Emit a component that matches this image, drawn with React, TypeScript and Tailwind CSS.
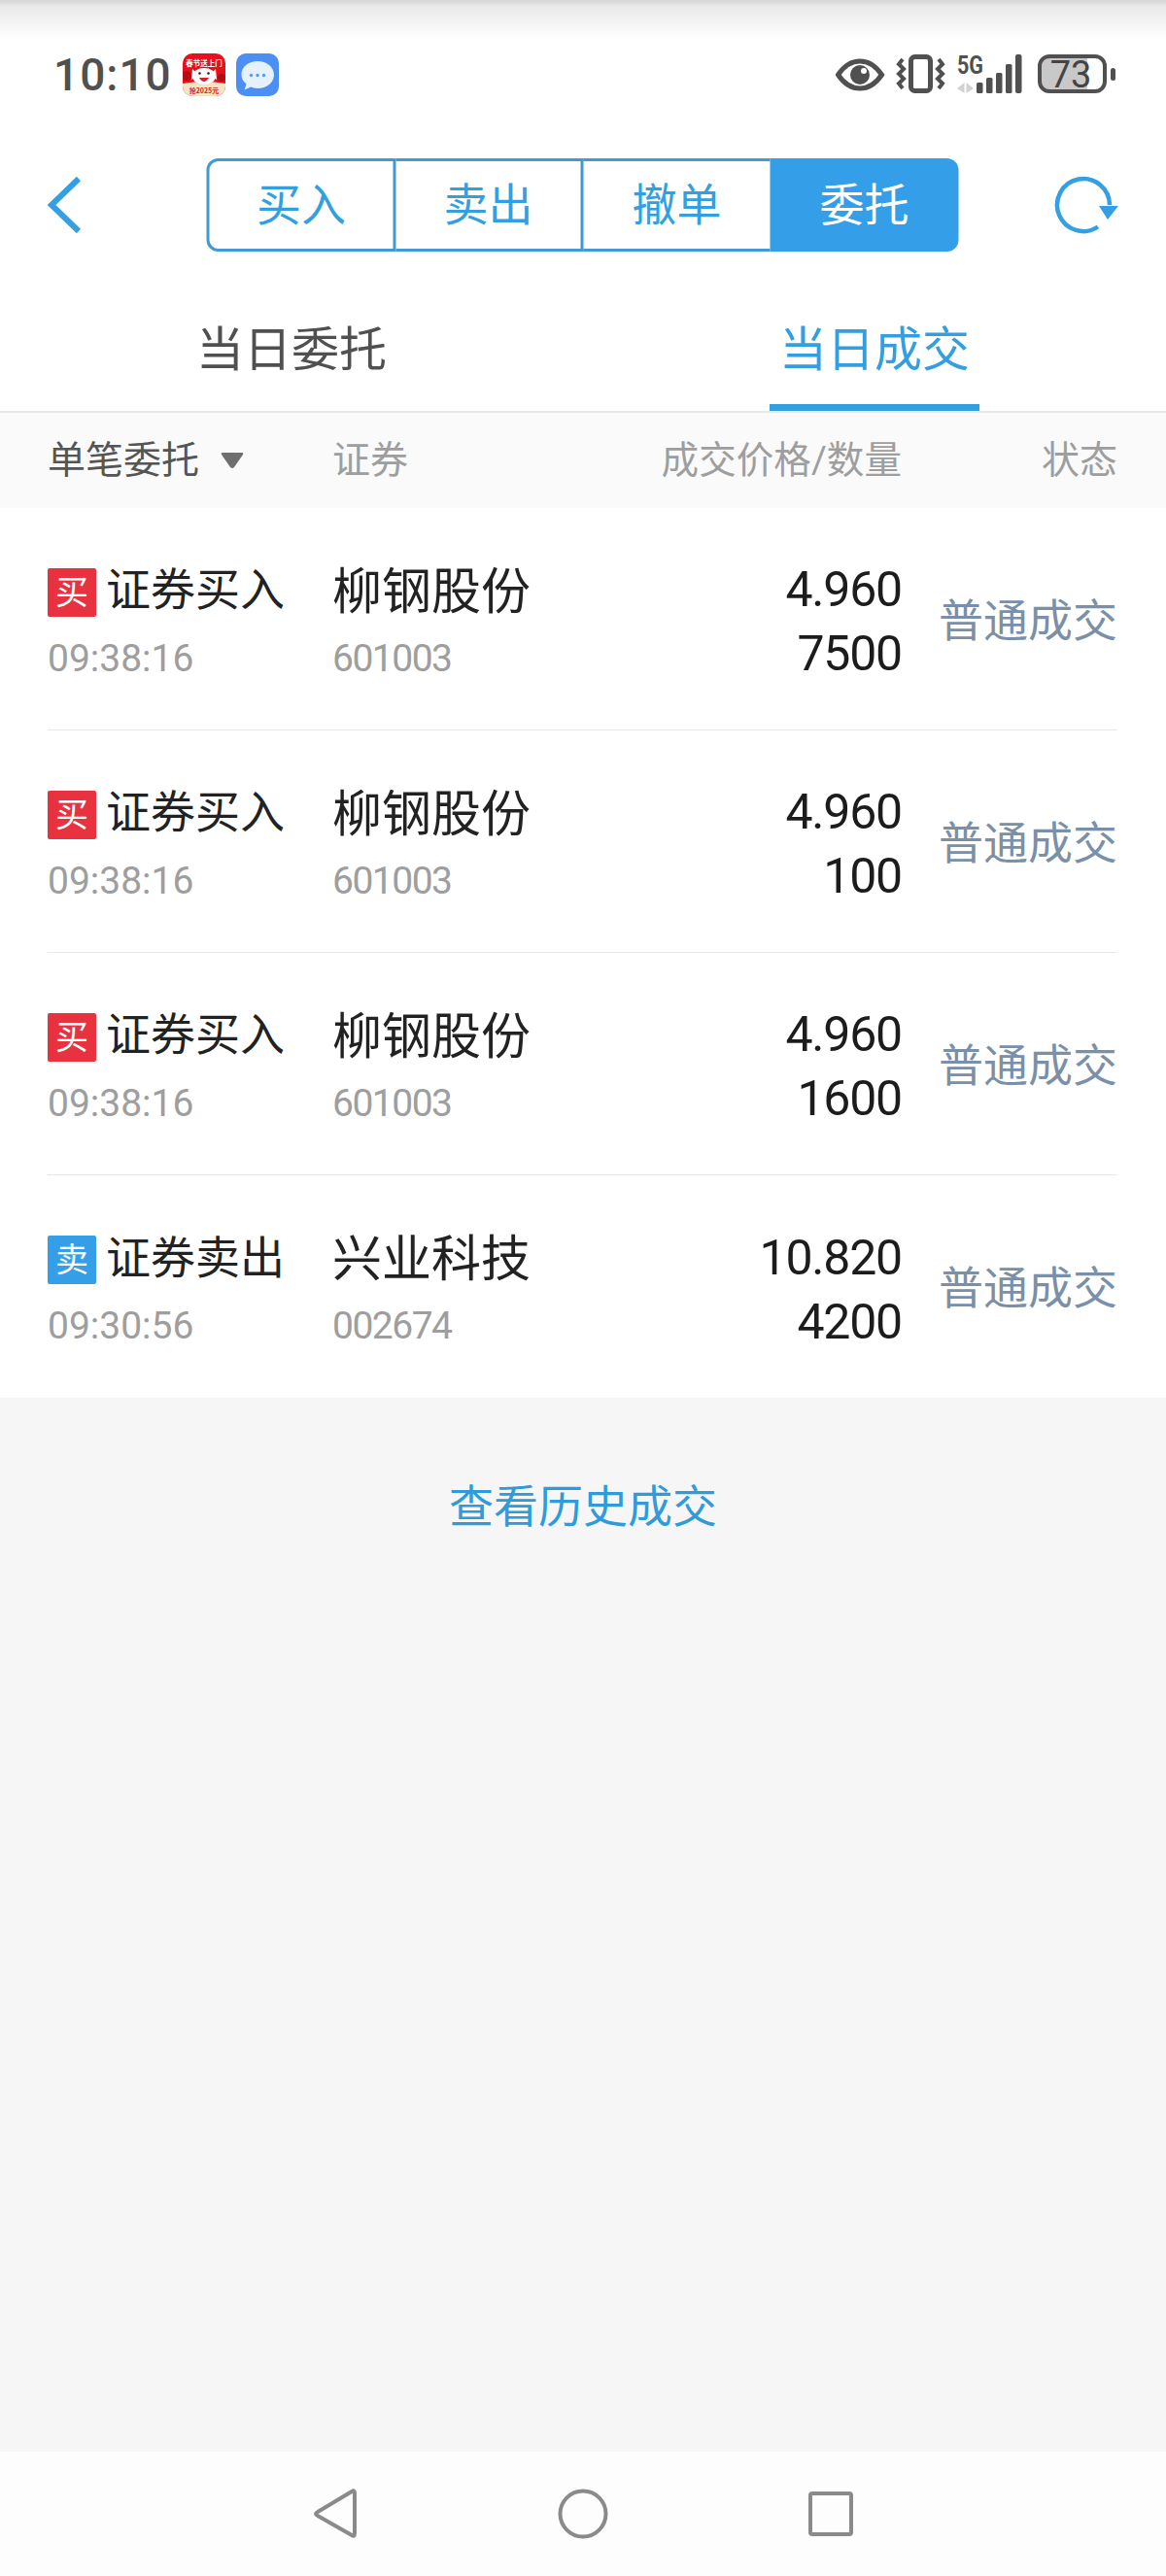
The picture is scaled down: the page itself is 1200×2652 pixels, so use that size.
import React from "react";

const rows = [
  { side: "买", action: "证券买入", time: "09:38:16", name: "柳钢股份", code: "601003", price: "4.960", qty: "7500" },
  { side: "买", action: "证券买入", time: "09:38:16", name: "柳钢股份", code: "601003", price: "4.960", qty: "100" },
  { side: "买", action: "证券买入", time: "09:38:16", name: "柳钢股份", code: "601003", price: "4.960", qty: "1600" },
  { side: "卖", action: "证券卖出", time: "09:30:56", name: "兴业科技", code: "002674", price: "10.820", qty: "4200" },
];

function JdIcon() {
  return (
    <svg width="44" height="44" viewBox="0 0 44 44" className="block">
      <defs>
        <clipPath id="jd"><rect width="44" height="44" rx="10" /></clipPath>
      </defs>
      <g clipPath="url(#jd)">
        <rect width="44" height="44" fill="#e60f1a" />
        <path d="M0 31 Q22 27 44 31 V44 H0Z" fill="#f4e3c4" />
        <circle cx="4" cy="23" r="5" fill="#b30c14" />
        <circle cx="40" cy="25" r="4" fill="#b30c14" />
        <ellipse cx="22" cy="23.500" rx="12" ry="8.500" fill="#fff" />
        <path d="M10 16 L16 22 L9 27Z M34 16 L28 22 L35 27Z" fill="#fff" />
        <path d="M17 25 Q22 33 27 25Z" fill="#d81e28" />
        <circle cx="17.500" cy="20.500" r="1.300" fill="#222" />
        <circle cx="26.500" cy="20.500" r="1.300" fill="#222" />
        <text x="22" y="13" textAnchor="middle" fontSize="7.500" fontWeight="700" fill="#fff" fontFamily="Noto Sans CJK SC">春节送上门</text>
        <text x="22" y="40.500" textAnchor="middle" fontSize="7" fontWeight="700" fill="#c8281e" fontFamily="Noto Sans CJK SC">抢2025元</text>
      </g>
    </svg>
  );
}

function MsgIcon() {
  return (
    <svg width="44" height="44" viewBox="0 0 44 44" className="block">
      <rect width="44" height="44" rx="10" fill="#4b8ff5" />
      <path d="M22 8 C31.500 8 39 14 39 22 C39 30 31.500 36 22 36 C19.500 36 17 35.500 15 34.600 L8.500 37.500 L10.500 31.500 C7 28.500 5.500 25.500 5.500 22 C5.500 14 12.500 8 22 8Z" fill="#e6f1fe" />
      <circle cx="15.500" cy="22.500" r="1.700" fill="#5b97ef" />
      <circle cx="22" cy="22.500" r="1.700" fill="#5b97ef" />
      <circle cx="28.500" cy="22.500" r="1.700" fill="#5b97ef" />
    </svg>
  );
}

function StatusIcons() {
  return (
    <svg width="290" height="56" viewBox="0 -6 290 56" className="-mt-[6px] block" fill="none">
      <path d="M2.500 22 C10 11 19 8 25 8 C31 8 40 11 47.500 22 C40 33 31 36 25 36 C19 36 10 33 2.500 22Z" stroke="#505050" strokeWidth="5" />
      <circle cx="25" cy="22" r="10" fill="#505050" />
      <circle cx="29" cy="18" r="3" fill="#fff" />

      <rect x="77.500" y="3.500" width="20" height="35" rx="4" stroke="#505050" strokeWidth="5" />
      <path d="M69 6 L65 11 L70 16 L65 21 L70 26 L65 31 L69 36" stroke="#505050" strokeWidth="4" />
      <path d="M106 6 L110 11 L105 16 L110 21 L105 26 L110 31 L106 36" stroke="#505050" strokeWidth="4" />

      <text x="125" y="21" fontSize="25" fontWeight="700" fill="#505050" fontFamily="Roboto" textLength="27" lengthAdjust="spacingAndGlyphs">5G</text>
      <path d="M125 36 L132.500 30 V41Z M134.500 30 L142 36 L134.500 41Z" fill="#d2d2d2" />

      <rect x="145" y="30" width="6.500" height="11" rx="1.500" fill="#505050" />
      <rect x="155" y="25" width="6.500" height="16" rx="1.500" fill="#505050" />
      <rect x="165" y="20" width="6.500" height="21" rx="1.500" fill="#505050" />
      <rect x="175" y="11" width="6.500" height="30" rx="1.500" fill="#505050" />
      <rect x="185" y="1" width="6.500" height="40" rx="2" fill="#505050" />

      <path d="M218 3 H259 V39 H218 Q210 39 210 31 V11 Q210 3 218 3Z" fill="#c8c8c8" />
      <rect x="210" y="3" width="67" height="36" rx="10" stroke="#505050" strokeWidth="4" />
      <rect x="283" y="15" width="5" height="13" rx="2.500" fill="#505050" />
      <text x="242" y="35" textAnchor="middle" fontSize="38" fill="#444" fontFamily="Roboto">73</text>
    </svg>
  );
}

export default function App() {
  return (
    <div className="flex h-[2652px] w-[1200px] flex-col bg-white font-['Roboto','Noto_Sans_CJK_SC',sans-serif]">
      {/* status bar */}
      <div className="flex h-[163px] items-start justify-between bg-[linear-gradient(#d6d6d6,#dcdcdc_3px,#e9e9e9_6px,#ffffff_40px)] pl-[55px] pr-[50px] pt-[55px]">
        <div className="flex items-center">
          <span className="w-[133px] text-[46px] leading-[44px] font-medium tracking-[1px] text-[#505050]">10:10</span>
          <JdIcon />
          <span className="ml-[11px]"><MsgIcon /></span>
        </div>
        <StatusIcons />
      </div>

      {/* nav */}
      <div className="relative flex h-[96px] shrink-0 items-center justify-center">
        <svg width="40" height="64" viewBox="0 0 40 64" className="absolute left-[46px] top-[16px]" fill="none">
          <path d="M35 5 L7 32 L35 59" stroke="#349fe3" strokeWidth="6" />
        </svg>
        <div className="flex h-[96px] w-[774px] -translate-x-[0.5px] text-[46px] leading-none text-[#349fe0]">
          <div className="flex w-[195px] items-center justify-center rounded-l-[12px] border-[3px] border-[#429ad5]">买入</div>
          <div className="flex w-[193px] items-center justify-center border-y-[3px] border-r-[3px] border-[#429ad5]">卖出</div>
          <div className="flex w-[192px] items-center justify-center border-y-[3px] border-[#429ad5]">撤单</div>
          <div className="flex flex-1 items-center justify-center rounded-r-[12px] bg-[#349fe8] text-white">委托</div>
        </div>
        <svg width="72" height="68" viewBox="0 0 72 68" className="absolute left-[1084px] top-[14px]" fill="none">
          <path d="M46 56.500 A27 27 0 1 1 58 34" stroke="#349fe3" strokeWidth="4.500" />
          <path d="M47 35 L67 35 L56 49Z" fill="#349fe3" />
        </svg>
      </div>

      {/* tabs */}
      <div className="flex h-[166px] shrink-0 items-end border-b-[2px] border-[#e8e8e8] text-[49px] leading-none">
        <div className="ml-[202px] flex h-[94px] items-start pt-[7px] text-[#505050]">当日委托</div>
        <div className="ml-[394px] flex h-[94px] w-[216px] items-start justify-center border-b-[7px] border-[#349fe0] pt-[7px] text-[#349fe0]">当日成交</div>
      </div>

      {/* table header */}
      <div className="grid h-[98px] shrink-0 grid-cols-[293px_1fr_auto_222px] items-center bg-[#fafafa] pl-[49px] pr-[50px] text-[39px] leading-none text-[#9e9e9e]">
        <div className="flex items-center text-[#555555]">
          <span>单笔委托</span>
          <svg width="26" height="20" viewBox="0 0 26 20" className="ml-[21px]">
            <path d="M3 2 H23 Q25 2 24 4 L15 17 Q13 19 11 17 L2 4 Q1 2 3 2Z" fill="#6f6f6f" />
          </svg>
        </div>
        <div>证券</div>
        <div className="pl-[3px] text-[38.600px]">成交价格/数量</div>
        <div className="text-right">状态</div>
      </div>

      {/* rows */}
      <div className="shrink-0 pl-[49px] pr-[50px]">
        {rows.map((r, i) => (
          <div
            key={i}
            className={
              "grid h-[229px] grid-cols-[293px_1fr_auto_222px] items-center " +
              (i < rows.length - 1 ? "border-b border-[#e8e8e8]" : "")
            }
          >
            <div className="pt-[11px]">
              <div className="flex items-center text-[46px] leading-[50px] text-[#222222]">
                <span
                  className={
                    "mr-[10px] flex h-[50px] w-[50px] items-center justify-center rounded-[2px] text-[34px] leading-none text-white " +
                    (r.side === "买" ? "bg-[#e8323f]" : "bg-[#349fe8]")
                  }
                >
                  {r.side}
                </span>
                <span className="-mt-[5px]">{r.action}</span>
              </div>
              <div className="mt-[20px] text-[39px] leading-[46px] text-[#9e9e9e]">{r.time}</div>
            </div>
            <div className="pt-[11px]">
              <div className="text-[51px] leading-[50px] text-[#222222]">{r.name}</div>
              <div className="mt-[20px] text-[39px] leading-[46px] tracking-[-1.5px] text-[#9e9e9e]">{r.code}</div>
            </div>
            <div className="pt-[6px] text-right text-[50px] leading-[66px] tracking-[-1.2px] text-[#1c1c1c]">
              <div>{r.price}</div>
              <div>{r.qty}</div>
            </div>
            <div className="pt-[3px] text-right text-[46px] leading-none text-[#7a90a8]">普通成交</div>
          </div>
        ))}
      </div>

      {/* history */}
      <div className="flex min-h-0 flex-1 justify-center bg-[#f6f6f6] pt-[87px] text-[46px] leading-[50px] text-[#2f9bd8]">
        查看历史成交
      </div>

      {/* system nav */}
      <div className="relative h-[128px] shrink-0 bg-[#fdfdfd]">
        <svg width="640" height="128" viewBox="0 0 640 128" className="absolute left-[280px] top-0" fill="none">
          <path d="M82 41 Q85 39 85 43 V84 Q85 88 82 86 L47 66 Q43 64 47 62Z" stroke="#8a8a8a" strokeWidth="4" />
          <circle cx="320" cy="64" r="23.500" stroke="#8a8a8a" strokeWidth="4" />
          <rect x="554" y="43" width="42" height="42" rx="2" stroke="#8a8a8a" strokeWidth="4" />
        </svg>
      </div>
    </div>
  );
}
